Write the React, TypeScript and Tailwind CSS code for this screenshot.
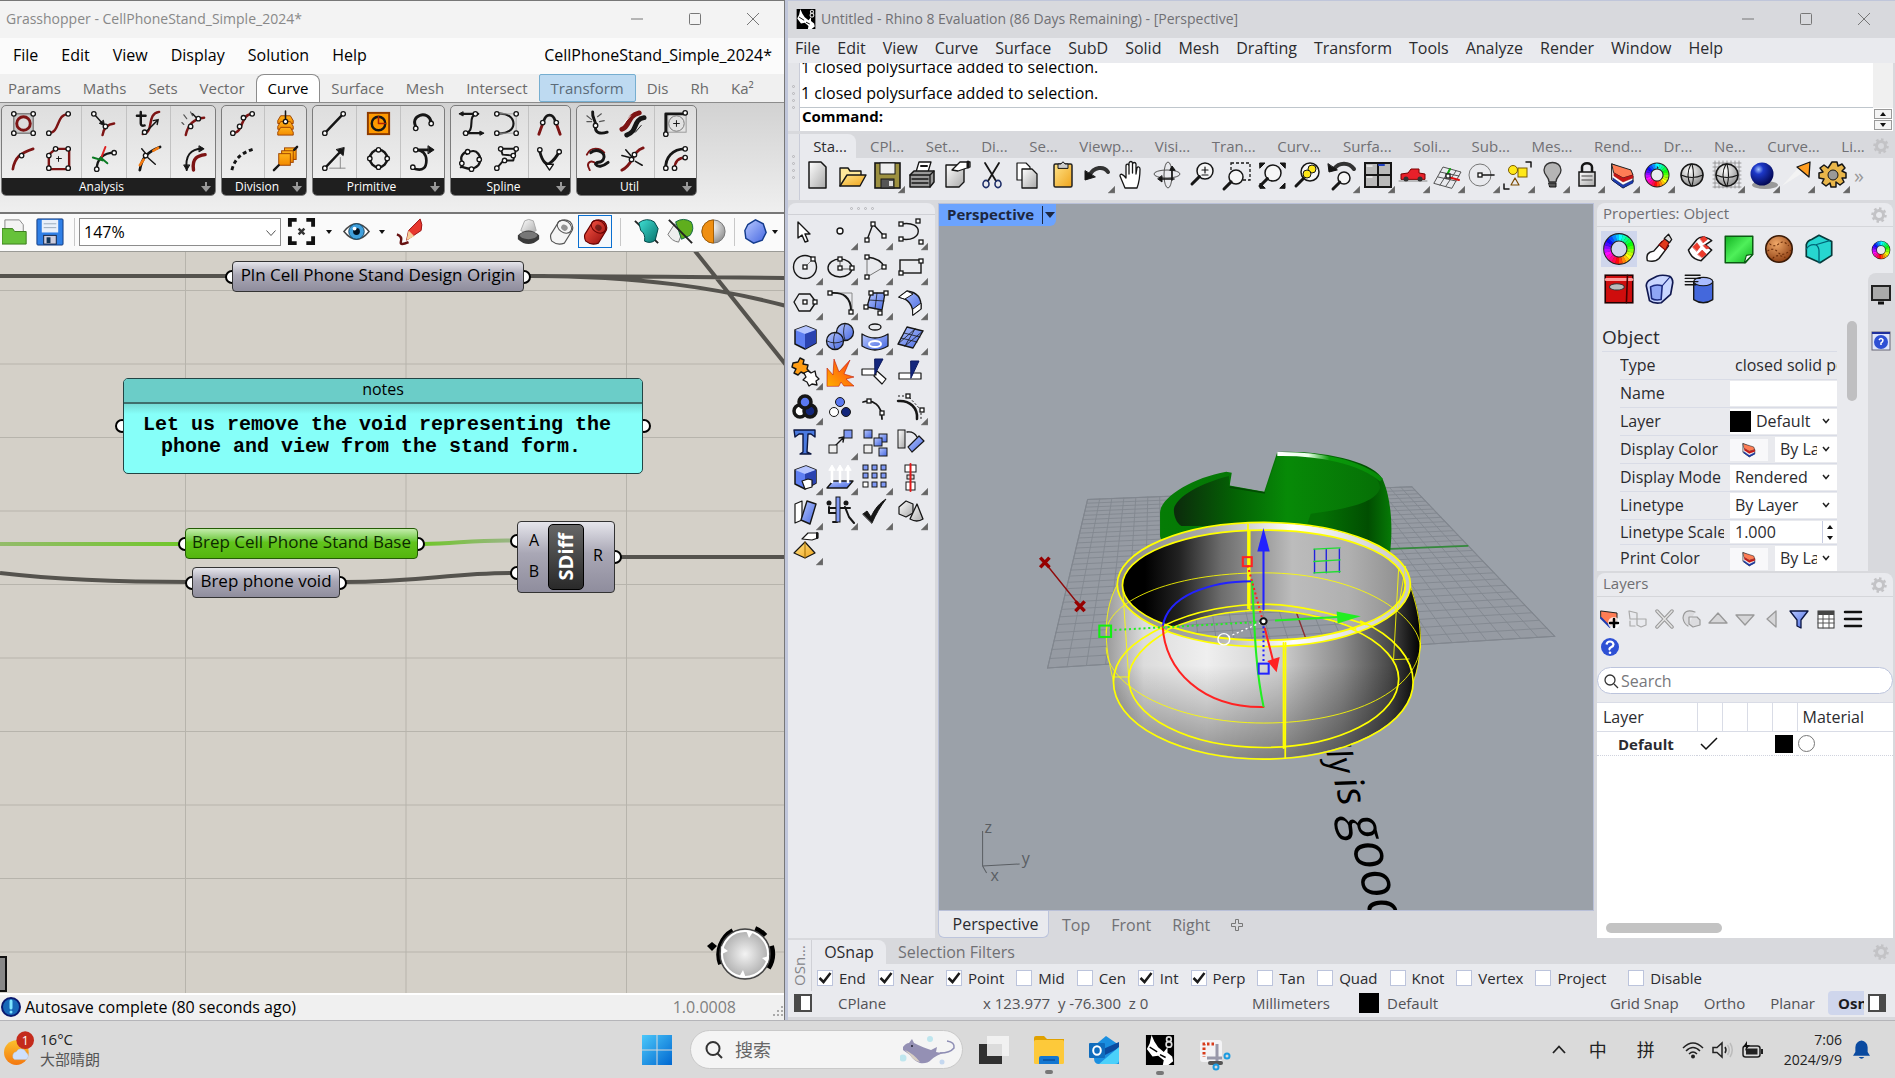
import React from "react";
import type { ReactNode } from "react";

/* ---------- drawing helpers ---------- */
const K = "#161616";
const M = "#7d1414";
const L = (d: string, c = K, w = 1.5, f = "none") => (
  <path d={d} stroke={c} strokeWidth={w} fill={f} strokeLinecap="round" strokeLinejoin="round" />
);
const Dots = ({ p }: { p: number[][] }) => (
  <>
    {p.map(([x, y], i) => (
      <circle key={i} cx={x} cy={y} r="2.3" fill="#fff" stroke={K} strokeWidth="1.4" />
    ))}
  </>
);
const Sqs = ({ p }: { p: number[][] }) => (
  <>
    {p.map(([x, y], i) => (
      <rect key={i} x={x - 2} y={y - 2} width="4" height="4" fill="#fff" stroke={K} strokeWidth="1.3" />
    ))}
  </>
);
const Wheel = ({ cx, cy, r, w }: { cx: number; cy: number; r: number; w: number }) => (
  <>
    <circle cx={cx} cy={cy} r={r} fill="none" stroke="#222" strokeWidth={w + 2} />
    {Array.from({ length: 24 }, (_, i) => (
      <circle
        key={i}
        cx={cx}
        cy={cy}
        r={r}
        fill="none"
        stroke={`hsl(${270 - i * 15} 100% 52%)`}
        strokeWidth={w}
        pathLength={24}
        strokeDasharray="1.05 22.95"
        strokeDashoffset={-i - 12}
      />
    ))}
  </>
);

const Defs = () => (
  <svg className="absolute size-0" aria-hidden="true">
    <defs>
      <linearGradient id="blue" x1="0" y1="0" x2="1" y2="1"><stop offset="0" stopColor="#b9c9ff" /><stop offset="1" stopColor="#4466e0" /></linearGradient>
      <linearGradient id="grey" x1="0" y1="0" x2="1" y2="1"><stop offset="0" stopColor="#fff" /><stop offset="1" stopColor="#a9a9a9" /></linearGradient>
      <linearGradient id="gold" x1="0" y1="0" x2="1" y2="1"><stop offset="0" stopColor="#ffe48a" /><stop offset="1" stopColor="#efa41c" /></linearGradient>
      <linearGradient id="orange" x1="0" y1="0" x2="0" y2="1"><stop offset="0" stopColor="#ffb21a" /><stop offset="1" stopColor="#f28a00" /></linearGradient>
      <linearGradient id="fire" x1="1" y1="0" x2="0" y2="1"><stop offset="0" stopColor="#ff3c14" /><stop offset="1" stopColor="#ffb000" /></linearGradient>
      <linearGradient id="grn" x1="0" y1="0" x2="1" y2="1"><stop offset="0" stopColor="#12b322" /><stop offset=".5" stopColor="#4ff05a" /><stop offset="1" stopColor="#10b020" /></linearGradient>
      <radialGradient id="navy" cx=".35" cy=".3" r=".7"><stop offset="0" stopColor="#9fc0ff" /><stop offset=".3" stopColor="#1d38c8" /><stop offset="1" stopColor="#040a58" /></radialGradient>
      <radialGradient id="ball" cx=".4" cy=".3" r=".75"><stop offset="0" stopColor="#fff" /><stop offset="1" stopColor="#8b8b8b" /></radialGradient>
      <radialGradient id="wood" cx=".4" cy=".3" r=".75"><stop offset="0" stopColor="#f0a868" /><stop offset="1" stopColor="#8a3b10" /></radialGradient>
      <radialGradient id="knob" cx=".5" cy=".5" r=".6"><stop offset="0" stopColor="#f3f3f3" /><stop offset="1" stopColor="#9d9d9d" /></radialGradient>
      <linearGradient id="redg" x1="0" y1="0" x2="1" y2="1"><stop offset="0" stopColor="#ff5b4a" /><stop offset="1" stopColor="#8f0808" /></linearGradient>
      <linearGradient id="teal" x1="0" y1="0" x2="1" y2="1"><stop offset="0" stopColor="#3fe0d4" /><stop offset="1" stopColor="#08726c" /></linearGradient>
      <linearGradient id="sun" x1="0" y1="0" x2="0" y2="1"><stop offset="0" stopColor="#fbc02d" /><stop offset="1" stopColor="#f4780f" /></linearGradient>
      <linearGradient id="win" x1="0" y1="0" x2="1" y2="1"><stop offset="0" stopColor="#4cc8fa" /><stop offset="1" stopColor="#0067d0" /></linearGradient>
    </defs>
  </svg>
);

/* ---------- Grasshopper ribbon icons (30 x 30) ---------- */
const gh: Record<string, ReactNode> = {
  frame: <><rect x="5" y="5" width="20" height="20" fill="#c9c9c9" stroke="#555" /><circle cx="15" cy="15" r="7" fill="#ddd" stroke={M} strokeWidth="3" /><Dots p={[[5, 5], [25, 5], [5, 25], [25, 25]]} /></>,
  scurve: <>{L("M5 25C17 24 12 6 25 5", M, 2.5)}<Dots p={[[5, 25], [25, 5]]} /></>,
  closest: <>{L("M5 5L14 15")}{L("M15 12l1 5-5-2z", K, 1, K)}{L("M14 27C15 20 18 16 26 15", M, 2.5)}<Dots p={[[5, 5], [17, 18]]} /></>,
  tcurve: <>{L("M7 3v12q0 3 4 2M3 7h9", K, 2.5)}{L("M9 26C22 24 12 5 26 3", M, 2.5)}{L("M11 25L25 11M25 11l-1 5M25 11l-5 1")}<Dots p={[[11, 24]]} /></>,
  curvature: <>{L("M7 27C9 17 15 10 26 9", M, 2.5)}{L("M5 16l-2-2M8 10L5 6M14 7l-2-4", "#555", 1.2)}{L("M14 5l5 5")}<Dots p={[[20, 10], [12, 18]]} /></>,
  evalc: <>{L("M4 26C6 14 12 9 25 5", M, 2.8)}<Dots p={[[13, 12]]} /></>,
  area: <>{L("M5 11L12 5H26V26H5Z", M, 2.5)}{L("M15 13v5M13 15h5", K, 1)}<Dots p={[[12, 5], [25, 5], [5, 12], [5, 25], [25, 25]]} /></>,
  perp: <>{L("M8 26C8 16 14 9 27 9", K, 2.4)}{L("M12 16L17 3", "#d22", 2)}{L("M14 17L4 14M12 14L19 20", "#0a7a22", 2)}<Dots p={[[8, 26], [26, 9]]} /></>,
  torsion: <>{L("M6 27C8 14 14 8 27 3", K, 2.8)}{L("M6 22L10 16M20 7l5-3", "#f47a10", 2.6)}{L("M8 5l5 6M13 13l9 8")}<Dots p={[[12, 12]]} /></>,
  horiz: <>{L("M15 27C13 14 20 12 27 11", M, 3.5)}{L("M8 27C6 12 12 5 24 5", K, 2)}{L("M21 2l5 3-5 3zM5 22l3 5 3-5z", K, 1, K)}</>,
  divide: <>{L("M5 25C17 24 12 6 25 5", M, 2.6)}<Dots p={[[5, 25], [12, 18], [16, 9], [25, 5]]} /></>,
  contour: <>{[7, 13, 19].map((y) => <path key={y} d={`M7 ${y + 5}l3-5h10l3 5v3H7z`} fill="url(#orange)" stroke="#a04400" />)}{L("M15 2v11", K, 1.6)}<Dots p={[[15, 13]]} /></>,
  dash: <><path d="M4 27C7 15 14 9 27 5" stroke={K} strokeWidth="3" fill="none" strokeDasharray="4 3" /></>,
  sheets: <>{[0, 3, 6].map((o) => <rect key={o} x={14 - o} y={4 + o} width="12" height="12" fill="url(#orange)" stroke="#a04400" />)}{L("M24 6L27 3M3 27l5-5", K, 2.5)}</>,
  line: <>{L("M5 25L24 5", K, 2.5)}<Dots p={[[5, 25], [24, 5]]} /></>,
  circ: <><rect x="4" y="4" width="22" height="22" fill="#ff9a00" stroke="#8c3a00" strokeWidth="2" /><circle cx="15" cy="15" r="7" fill="none" stroke={K} strokeWidth="2.5" />{L("M15 15h7M15 8v7", "#b32000", 1.6)}</>,
  arc: <>{L("M9 20C0 6 22 0 24 14", K, 3)}<Dots p={[[8, 20], [24, 15]]} /></>,
  vec: <>{L("M5 25L22 7", K, 2.5)}{L("M25 4l-1 8-7-6z", K, 1, K)}{L("M10 25h16M21 14v11", "#888", 1)}<Dots p={[[5, 25]]} /></>,
  ring: <><circle cx="15" cy="15" r="9" fill="none" stroke={K} strokeWidth="2.6" /><Dots p={[[15, 6], [15, 24], [6, 15], [24, 15]]} /></>,
  hook: <>{L("M5 25C16 29 19 24 19 17C19 11 15 6 9 6H20", K, 2.8)}{L("M21 2l6 4-6 4z", K, 1, K)}<Dots p={[[5, 24], [8, 6]]} /></>,
  bez: <>{L("M5 5H22C8 6 22 24 7 25H25", K, 2.2)}{L("M6 3l-4 2 4 2zM24 23l4 2-4 2z", K, 1, K)}<Dots p={[[19, 5], [9, 25]]} /></>,
  interp: <>{L("M5 5C28 2 28 28 5 25", K, 2.2)}{L("M5 5h20v20H5", "#aaa", 1)}<Dots p={[[5, 5], [25, 5], [5, 25], [25, 25]]} /></>,
  cat: <>{L("M9 13C11 4 19 4 21 13", K, 2.8)}{L("M4 26L8 15M26 26L22 15", M, 3)}<Dots p={[[8, 14], [22, 14]]} /></>,
  kink: <>{L("M10 10C20 2 28 14 22 22C14 30 6 22 4 24", K, 2.4)}{L("M6 20C2 14 6 8 12 8", K, 2.4)}<Dots p={[[11, 8], [23, 16], [5, 20], [15, 26]]} /></>,
  poly: <>{L("M5 25L12 17H22L25 5H9L11 11L22 12", K, 2)}<Dots p={[[5, 25], [13, 17], [22, 12], [25, 5], [9, 5]]} /></>,
  vee: <>{L("M5 8C8 20 13 22 15 20C18 18 22 14 25 8", K, 3)}{L("M11 21h8l-4 6z", K, 1.4, "#fff")}<Dots p={[[5, 6], [25, 8]]} /></>,
  tt: <>{L("M10 3C9 10 14 12 13 18C12 25 18 26 25 24", K, 3)}{L("M4 7l5 4M15 8l4-3M4 13l5 0M17 13l5-1", "#555", 1.2)}<Dots p={[[13, 17]]} /></>,
  flip: <>{L("M4 21C13 18 9 7 22 4", M, 5)}{L("M9 27C21 23 15 11 27 9", K, 5)}{L("M6 15l7-8", "#fff", 1)}{L("M18 24l6-7", K, 1)}</>,
  fillet: <><rect x="7" y="5" width="19" height="19" fill="none" stroke="#999" />{L("M5 25V5H26", K, 3)}<circle cx="16" cy="15" r="8" fill="none" stroke="#777" />{L("M13 15h6M16 12v6", K, 1)}<Dots p={[[25, 4], [5, 26]]} /></>,
  swirl: <>{L("M4 11C8 2 18 4 22 9", M, 2)}{L("M7 27C2 18 9 16 14 21", M, 2)}{L("M8 9C14 4 25 9 21 16C18 21 14 17 13 21C15 24 20 24 26 19", K, 3)}</>,
  rebuild: <>{L("M4 27C16 22 14 8 26 4", M, 3)}{L("M8 6l6 7M4 12l8 2M18 18l7 4", K, 1.6)}<Dots p={[[14, 16], [17, 11]]} /></>,
  offset: <>{L("M5 26C4 14 12 5 25 5", K, 3)}{L("M14 26C14 18 18 14 26 14", M, 2.5)}<Dots p={[[5, 25], [14, 25], [25, 5], [25, 14]]} /></>,
};
const groups: { name: string; width: string; cols: string[][][] }[] = [
  { name: "Analysis", width: "w-[215px]", cols: [[["frame", "evalc"], ["scurve", "area"]], [["closest", "perp"]], [["tcurve", "torsion"]], [["curvature", "horiz"]]] },
  { name: "Division", width: "w-[86px]", cols: [[["divide", "dash"]], [["contour", "sheets"]]] },
  { name: "Primitive", width: "w-[133px]", cols: [[["line", "vec"]], [["circ", "ring"]], [["arc", "hook"]]] },
  { name: "Spline", width: "w-[121px]", cols: [[["bez", "kink"], ["interp", "poly"]], [["cat", "vee"]]] },
  { name: "Util", width: "w-[121px]", cols: [[["tt", "swirl"], ["flip", "rebuild"]], [["fillet", "offset"]]] },
];

/* ---------- Rhino icons, 35 x 36, centred on 17,17 ---------- */
const mag = (x: number, y: number, r: number) => (
  <>
    <circle cx={x} cy={y} r={r} fill="#f6f6f6" stroke={K} strokeWidth="1.5" />
    {L(`M${x - r * 0.7} ${y + r * 0.7}L${x - r - 5} ${y + r + 5}`, K, 3)}
  </>
);
const stackIcon = (
  <>
    {L("M7 6L25 14L28 18V24L18 30L7 22Z", "#111", 1, "#fff")}
    {L("M7 6L26 12L28 17L18 20L9 15Z", "#222", 1, "#ff7d55")}
    {L("M9 15L18 20L28 17V20L18 24L9 18Z", "#a01010", 0.5, "#c81414")}
    {L("M8 20L18 27L28 22V25L18 30L8 23Z", "#0a1550", 0.5, "#1c3cb0")}
  </>
);
const sphere = (
  <>
    <circle cx="17" cy="17" r="11" fill="url(#ball)" stroke={K} strokeWidth="1.5" />
    {L("M6 17Q17 22 28 17M16 6Q10 17 16 28M17 6Q20 17 17 28", K, 1.1)}
  </>
);
const cube = (
  <>
    {L("M7 10L18 6L28 10V23L17 29L7 24Z", K, 1.5, "#5f7ff2")}
    {L("M7 10L18 6L28 10L17 14Z", "none", 0, "#b5c5ff")}
    {L("M17 14L28 10V23L17 29Z", "none", 0, "#2b43b0")}
  </>
);
const rh: Record<string, ReactNode> = {
  new: L("M9 4H21L26 9V30H9Z", K, 1.5, "url(#grey)"),
  open: <>{L("M5 28V10H13L15 13H26V17", K, 1.4, "#ffe89a")}{L("M5 28L12 17H31L25 28Z", K, 1.4, "url(#gold)")}</>,
  save: <><rect x="5" y="5" width="25" height="25" fill="#9c9040" stroke={K} strokeWidth="1.6" /><rect x="10" y="5" width="15" height="11" fill="#eee" stroke={K} /><rect x="11" y="21" width="13" height="9" fill="#555" stroke={K} /><rect x="19" y="23" width="4" height="5" fill="#ddd" /></>,
  print: <>{L("M11 14L14 4H26L23 14Z", K, 1.3, "#fff")}{L("M5 17L9 13H29V24L25 29H5Z", K, 1.5, "#999")}{L("M5 17H25V29M25 17l4-4M7 21h16M7 25h16", K, 1.3)}{L("M16 8h6", K, 2)}</>,
  props: <>{L("M6 7H24V24L19 29H6Z", K, 1.4, "url(#grey)")}{L("M12 12L20 4H30V9L24 11L18 13Z", K, 1.3, "#fff")}{L("M28 4v5", K, 3)}</>,
  cut: <>{L("M10 5L21 23M24 5L13 23", K, 1.8)}<ellipse cx="11" cy="26" rx="3" ry="3.6" fill="none" stroke="#20306a" strokeWidth="1.6" /><ellipse cx="23" cy="26" rx="3" ry="3.6" fill="none" stroke="#20306a" strokeWidth="1.6" /></>,
  copy: <>{L("M7 5H16L20 9V22H7Z", K, 1.2, "#fff")}{L("M12 11H22L27 16V30H12Z", K, 1.3, "url(#grey)")}</>,
  paste: <><rect x="9" y="6" width="18" height="23" rx="1.5" fill="url(#gold)" stroke="#222" strokeWidth="1.5" />{L("M13 10V6H16Q18 2 20 6H23V10Z", K, 1, "#ccc")}</>,
  undo: <>{L("M9 18C14 8 24 8 28 14", "#333", 4)}{L("M5 13L5 22L15 19Z", K, 1, K)}</>,
  pan: L("M10 30L5 18C5 15 8 16 11 20V8C11 5 14 6 14 8V16V5C15 3 17 3 17.5 5V15V6C18 4 20.5 4 21 6V16L22 10C23 8 25 9 25 11C25 18 25 22 22 30Z", K, 1.3, "#fff"),
  rotate: <><ellipse cx="17" cy="16" rx="13" ry="4" fill="none" stroke="#555" /><ellipse cx="18" cy="17" rx="4" ry="13" fill="none" stroke="#555" />{L("M12 21h12M22 11v11", K, 1.6)}{L("M12 18v6l-4-3zM20 12l2-4 3 4z", K, 1, K)}</>,
  zoompm: <>{mag(20, 13, 8)}{L("M17 12h6M20 9v6M17 17h6", K, 1.2)}</>,
  zoomwin: <><rect x="11" y="5" width="19" height="17" fill="none" stroke={K} strokeWidth="1.3" strokeDasharray="3 2" />{mag(16, 19, 7)}</>,
  zoomext: <>{mag(18, 15, 8)}{L("M5 5h5L5 10zM30 5h-5l5 5zM30 30v-5l-5 5zM5 30v-5l5 5z", K, 1, K)}</>,
  zoomsel: <>{mag(20, 14, 9)}<circle cx="22" cy="11" r="4" fill="#ffe818" stroke={K} /><circle cx="17" cy="16" r="4" fill="#ffe818" stroke={K} /></>,
  undoview: <>{mag(19, 20, 6)}{L("M9 11C14 4 24 4 29 11", "#333", 4)}{L("M3 6L4 14L12 12Z", K, 1, K)}</>,
  four: <><rect x="5" y="5" width="26" height="24" fill="#b9b9b9" stroke={K} strokeWidth="2" />{L("M18 5V29M5 17H31", K, 2)}{L("M7 8h5M7 19h5", "#eee")}{L("M19 7h5", "#2040c0", 2)}</>,
  car: <>{L("M4 23H32", "#888", 1)}{L("M6 21V16L13 15L16 11H24V15L30 16V21Z", "#7a0000", 1, "#e8202a")}<circle cx="11" cy="21" r="2.5" fill="#333" /><circle cx="25" cy="21" r="2.5" fill="#333" /></>,
  cplane: <>{L("M4 25L13 9L31 14L22 30ZM8 19L26 23M10 14L29 18M10 27L20 11M16 28L26 13", "#444", 0.9)}{L("M17 17L20 11", "#1a1", 2)}{L("M18 19L29 22", "#d11", 2)}<Sqs p={[[18, 18]]} /></>,
  circdraw: <><circle cx="15" cy="17" r="11" fill="none" stroke="#777" />{L("M15 17H29", K, 1.6)}<Sqs p={[[15, 17]]} /></>,
  shapes: <><circle cx="13" cy="12" r="4.5" fill="#ffe818" stroke="#7a5a00" /><rect x="18" y="10" width="9" height="9" fill="#ffe818" stroke="#7a5a00" />{L("M15 20L19 27H11Z", "#7a4a00", 1.2)}{L("M26 4h5v5M4 26v5h5", K, 1.5)}</>,
  bulb: <>{L("M14 24C14 18 9 18 9 12C9 2 26 2 26 12C26 18 21 18 21 24Z", "#333", 1.3, "#b5b5b5")}{L("M14 25h7v4h-6z", K, 1, "#555")}</>,
  lock: <>{L("M12 15V9C12 4 22 4 22 9V15", K, 2.5)}<rect x="9" y="14" width="16" height="14" fill="url(#grey)" stroke={K} strokeWidth="1.5" />{L("M12 18h10M12 22h10", "#777")}</>,
  layer: stackIcon,
  wheel: <Wheel cx={17} cy={17} r={9} w={5} />,
  bigwheel: <Wheel cx={17} cy={17} r={11} w={6} />,
  sphere,
  spheregrid: <>{L("M5 3V30M9 3V30M13 3V30M17 3V30M21 3V30M25 3V30M29 3V30M3 5H31M3 9H31M3 13H31M3 17H31M3 21H31M3 25H31M3 29H31", "#888", 0.8)}{sphere}</>,
  bluesphere: <><ellipse cx="20" cy="27" rx="13" ry="4" fill="#999" /><circle cx="17" cy="16" r="11.5" fill="url(#navy)" /></>,
  light: <>{L("M2 28L24 14L20 8Z", "none", 0, "#f3f3f3")}{L("M17 9L30 4L29 19Z", K, 1.3, "#ff9d20")}</>,
  gear: <>{L("M17 4h5l1 4 4-2 3 4-3 3 4 2v5l-4 0 2 4-4 3-4-3v5h-5l-1-4-4 3-4-3 2-4-5-1v-5l4-1-3-4 4-3 4 3z", K, 1.5, "#e9b64a")}<circle cx="18" cy="17" r="5" fill="#999" stroke={K} /></>,
  arrow: L("M10 7V23L14 20L17 27L20 26L17 19H22Z", K, 1.4, "#fff"),
  point: <circle cx="17" cy="16" r="3" fill="#fff" stroke={K} strokeWidth="1.4" />,
  polyl: <>{L("M9 25L15 9L26 21", K, 1.4)}<Sqs p={[[9, 25], [15, 9], [26, 21]]} /></>,
  ccurve: <>{L("M8 9C32 5 30 28 8 24", K, 1.4)}<Sqs p={[[8, 9], [25, 6], [8, 24], [28, 27]]} /></>,
  circle: <><circle cx="17" cy="17" r="11.5" fill="none" stroke={K} strokeWidth="1.4" />{L("M17 17L25 9", "#888", 1)}<Sqs p={[[17, 17], [25, 9]]} /></>,
  ell: <><ellipse cx="17" cy="18" rx="12" ry="9" fill="none" stroke={K} strokeWidth="1.4" />{L("M17 10V19H29", "#555", 1)}<Sqs p={[[17, 9], [17, 18], [29, 18]]} /></>,
  arc3: <>{L("M9 7C18 8 24 11 26 17", K, 1.4)}{L("M9 7V27L26 17", "#777", 1)}<Sqs p={[[9, 7], [9, 27], [26, 17]]} /></>,
  rect: <><rect x="7" y="10" width="21" height="13" fill="none" stroke={K} strokeWidth="1.4" /><Sqs p={[[8, 23], [28, 11]]} /></>,
  hex: <>{L("M11 9H22L28 17L22 26H11L6 17Z", K, 1.4)}<Sqs p={[[17, 17], [27, 17]]} /></>,
  fil: <>{L("M8 8H29V26", "#888", 1)}{L("M8 8C20 7 28 12 28 26", K, 2)}<Sqs p={[[7, 8], [28, 27]]} /></>,
  patch: <>{L("M13 8H27L24 25L9 22Z", K, 1.3, "url(#blue)")}{L("M19 8L17 24M11 15L26 16", K, 0.8)}<Sqs p={[[13, 8], [28, 8], [8, 22], [22, 28]]} /></>,
  sweep: <>{L("M6 12L14 6C24 7 29 13 28 24L20 30C20 20 16 14 6 12Z", K, 1.3, "url(#blue)")}{L("M6 12L14 6L20 9L12 14ZM20 24L28 18V24L20 30Z", K, 1, "#fff")}</>,
  box: cube,
  spheres: <><circle cx="22" cy="12" r="8.5" fill="url(#blue)" stroke={K} strokeWidth="1.3" /><circle cx="12" cy="21" r="8.5" fill="url(#blue)" stroke={K} strokeWidth="1.3" />{L("M4 21Q12 25 20 21M22 4Q19 12 22 20M12 13Q9 21 12 29", K, 0.8)}</>,
  bool: <><ellipse cx="17" cy="7" rx="6" ry="3" fill="none" stroke={K} strokeWidth="1.3" />{L("M4 14Q17 22 30 14V26Q17 34 4 26Z", K, 1.3, "url(#blue)")}<ellipse cx="17" cy="24" rx="6" ry="3" fill="none" stroke="#fff" strokeWidth="2" /></>,
  mesh: <>{L("M5 24L14 7L30 11L20 28Z", K, 1.3, "url(#blue)")}{L("M8 18L24 22M11 13L27 17M12 26L22 9M5 24L22 9M12 26L30 11", K, 0.8)}</>,
  puzzle: <>{L("M5 8L10 7L12 3L16 5L15 9L20 10L19 14L22 17L17 19L13 17L10 20L6 18L8 14L4 12Z", K, 1.4, "#ff9d14")}{L("M16 18L20 16L23 18L27 16L28 21L31 24L28 26L29 30L24 29L21 31L19 27L15 25L18 22Z", K, 1.3, "#fff")}</>,
  explode: L("M4 31V13L10 20L11 4L16 17L27 5L21 19L31 22L23 24L31 31H21L18 27L16 31Z", "#c01a08", 0.6, "url(#fire)"),
  trim: <>{L("M4 14H18V20H4ZM19 16L28 24L24 29L16 21Z", K, 1.2, "#fff")}{L("M17 4H25L17 19Z", "#0c1a60", 1, "#13267c")}</>,
  split: <>{L("M6 18H28V24H6Z", K, 1.2, "#fff")}{L("M18 6H26L18 23Z", "#0c1a60", 1, "#13267c")}</>,
  group: <><circle cx="12" cy="21" r="6" fill="#fff" stroke={K} strokeWidth="3.5" /><circle cx="22" cy="21" r="6" fill="#13267c" stroke={K} strokeWidth="3.5" /><circle cx="17" cy="12" r="6" fill="#5a78f0" stroke={K} strokeWidth="3.5" /></>,
  ungroup: <><circle cx="17" cy="12" r="4.5" fill="#5a78f0" stroke={K} /><circle cx="11" cy="22" r="4.5" fill="#fff" stroke={K} /><circle cx="23" cy="22" r="4.5" fill="#13267c" stroke={K} /></>,
  ptedit: <>{L("M5 12C15 9 24 15 24 29", K, 1.8)}<Sqs p={[[11, 11], [24, 23]]} /></>,
  cvedit: <>{L("M5 11C17 10 25 18 24 29", K, 2.5)}<path d="M5 6H15L28 20V30" fill="none" stroke={K} strokeDasharray="2 2" /><Sqs p={[[15, 6], [29, 20]]} /></>,
  text: <>{L("M6 5H27V12L23 9H20L19 27L23 29H12L15 27V9H11L7 12Z", "#0c1740", 1.4, "#4a7ae0")}</>,
  move: <>{L("M12 21L21 12M21 12l-1 5M21 12l-5 1", K, 1.4)}<rect x="6" y="20" width="8" height="8" fill="#eee" stroke={K} /><rect x="21" y="5" width="8" height="8" fill="#7f99f5" stroke={K} /></>,
  copyo: <>{[[6, 5], [21, 9], [21, 23], [16, 13]].map(([x, y], i) => <rect key={i} x={x} y={y} width="8" height="8" fill="url(#blue)" stroke={K} />)}<rect x="6" y="20" width="8" height="8" fill="#eee" stroke={K} /></>,
  rot: <><rect x="5" y="5" width="7" height="18" fill="url(#grey)" stroke={K} />{L("M14 7Q21 6 24 12", K, 1.3)}{L("M15 22L26 11L31 16L19 27Z", K, 1.2, "url(#blue)")}</>,
  boxw: <>{cube}{L("M14 21L20 19L24 20V27L17 29Z", K, 1.2, "#fff")}</>,
  extr: <>{L("M4 28L10 21H30L24 28Z", K, 1.4, "url(#blue)")}{L("M9 22V8M17 22V8M25 22V8", "#fff", 2.5)}{L("M6 10l3-5 3 5zM14 10l3-5 3 5zM22 10l3-5 3 5z", "#fff", 1, "#fff")}</>,
  array: <>{[5, 14, 23].map((x) => [5, 13, 22].map((y) => <rect key={`${x}${y}`} x={x} y={y} width="5" height="5" fill={x === 5 && y === 22 ? "#fff" : "#7f99f5"} stroke={K} />))}</>,
  dim: <><rect x="12" y="5" width="11" height="7" fill="#fff" stroke={K} /><rect x="14" y="15" width="7" height="4" fill="#ddd" stroke={K} /><rect x="13" y="22" width="9" height="8" fill="#fff" stroke={K} />{L("M17.5 4V31", "#e01818", 2)}</>,
  books: <>{L("M7 9L14 6V25L7 28Z", K, 1.2, "#fff")}{L("M19 6L28 9L22 29L13 25Z", K, 1.4, "url(#blue)")}</>,
  flow: <><circle cx="6" cy="8" r="2.5" fill={K} /><circle cx="23" cy="8" r="2.5" fill={K} />{L("M6 12V18H14V27M6 13H27M22 12L26 22L31 28M10 27h4", K, 2)}<rect x="13" y="2" width="4" height="25" fill="#7f99f5" stroke={K} /></>,
  check: L("M5 19L9 16L13 22C17 13 22 8 28 4C22 12 18 19 14 28Z", K, 1, K),
  solids: <>{L("M6 12L13 6L20 9V18L13 22L6 19Z", K, 1.2, "url(#grey)")}{L("M24 9L30 24Q24 28 17 24Z", K, 1.3, "url(#grey)")}</>,
  pyramid: <>{L("M17 12L27 23L17 28L6 23Z", K, 1.2, "url(#gold)")}{L("M17 12V28", "#a06a00", 1)}{L("M14 9L20 3H30V8L24 10Z", K, 1.2, "#fff")}{L("M29 3v5", K, 2)}</>,
  paint: <>{L("M6 28Q4 20 12 19L20 10L26 14L17 26Q13 30 6 28Z", K, 1.4, "#fff")}{L("M17 13L23 18L27 10L23 7Z", "#800", 1, "#e03a1c")}{L("M22 7L26 3L29 8L27 11Z", K, 1.2, "#ddd")}</>,
  texture: <>{L("M7 18L15 8Q20 3 29 9L23 13L29 18L19 28Q10 27 7 18Z", K, 1.4, "#fff")}{L("M11 15l4-4 3 4-3 4zM18 7l4-2 3 3-4 3zM16 22l4-4 4 4-4 3zM21 14l3 3 3-1-4-3z", "#c22", 0.5, "#ee3b2a")}</>,
  decal: <>{L("M4 5H30V22L23 30H4Z", "#0a5a12", 1.4, "url(#grn)")}{L("M22 30L24 23L30 22Z", "#0a5a12", 1, "#fff")}</>,
  wood: <><circle cx="17" cy="17" r="12.5" fill="url(#wood)" stroke="#3a1a06" strokeWidth="1.5" /><path d="M8 12q5 4 9 0t9 2M6 19q6-4 10 1t12-2M11 26q4-5 12-1" fill="none" stroke="#6a2b08" strokeDasharray="2 2" /></>,
  edge: <>{L("M5 13Q6 9 10 8L17 4L29 10V23L18 30L5 24Z", "#063a3a", 1.6, "#27d6d0")}{L("M5 17Q8 12 14 13Q17 15 17 19V30M14 13L27 9", "#067", 1.2)}</>,
  cabinet: <><rect x="4" y="4" width="26" height="26" fill="#cf0d0d" stroke="#200" strokeWidth="1.5" />{L("M5 8H29", "#ff9a9a", 3)}<ellipse cx="15" cy="15" rx="7" ry="3" fill="#bbb" stroke="#333" />{L("M25 4L24 30", "#400", 1.5)}</>,
  shell: <>{L("M5 14Q5 10 9 8L15 5Q20 3 27 5Q30 7 30 11L28 22L19 30Q12 31 8 28Z", "#101850", 1.6, "#c9d6ff")}{L("M9 15Q14 12 20 14L19 27Q13 28 10 26Z", "#1c2a80", 1.5, "#8fa6f6")}{L("M20 14L27 6", "#1c2a80", 1)}</>,
  cyl: <>{L("M12 10V27Q21 33 30 27V10", K, 1.3, "#4468dc")}<ellipse cx="21" cy="10" rx="9" ry="4" fill="#a9bcff" stroke={K} />{L("M4 4H18M4 7H18M4 10H16M4 13H14", K, 1.3)}</>,
};
const toolbar = ["new", "open", "save*", "print", "props", "cut", "copy", "paste", "undo*", "pan", "rotate", "zoompm", "zoomwin", "zoomext", "zoomsel", "undoview*", "four*", "car*", "cplane*", "circdraw*", "shapes*", "bulb*", "lock*", "layer*", "wheel*", "sphere", "spheregrid*", "bluesphere*", "light*", "gear*"];
const toolbox = ["arrow", "point*", "polyl*", "ccurve*", "circle*", "ell*", "arc3*", "rect*", "hex*", "fil*", "patch*", "sweep*", "box*", "spheres*", "bool*", "mesh*", "puzzle*", "explode", "trim", "split", "group*", "ungroup", "ptedit", "cvedit*", "text", "move*", "copyo", "rot", "boxw*", "extr*", "array*", "dim*", "books*", "flow*", "check*", "solids*", "pyramid*"];

const Tool = ({ id }: { id: string }) => {
  const name = id.replace("*", "");
  return (
    <button type="button" aria-label={name} className="h-9 w-[35px] shrink-0">
      <svg viewBox="0 0 35 36" className="h-9 w-[35px]">
        {rh[name]}
        {id.endsWith("*") && <path d="M35 28V35H28Z" fill="#666" stroke="#888" strokeWidth=".5" />}
      </svg>
    </button>
  );
};
const Gear = () => (
  <svg viewBox="0 0 16 16" className="size-4 shrink-0">
    <circle cx="8" cy="8" r="4.5" fill="none" stroke="#c3c3c6" strokeWidth="3" />
    <circle cx="8" cy="8" r="6.5" fill="none" stroke="#c3c3c6" strokeWidth="2.5" pathLength={16} strokeDasharray="1 1" />
  </svg>
);
const Caret = () => (
  <svg viewBox="0 0 6 4" className="h-1 w-1.5 shrink-0"><path d="M0 0H6L3 4Z" fill="#111" /></svg>
);
const WinButtons = ({ className = "" }: { className?: string }) => (
  <div className={`ml-auto flex items-center text-[#777] ${className}`}>
    <button type="button" aria-label="Minimize"><svg viewBox="0 0 14 14" className="size-3.5"><path d="M1 7H13" stroke="currentColor" /></svg></button>
    <button type="button" aria-label="Maximize"><svg viewBox="0 0 14 14" className="size-3.5"><rect x="1.5" y="1.5" width="11" height="11" rx="1" fill="none" stroke="currentColor" /></svg></button>
    <button type="button" aria-label="Close"><svg viewBox="0 0 14 14" className="size-3.5"><path d="M1 1L13 13M13 1L1 13" stroke="currentColor" /></svg></button>
  </div>
);

/* ---------- Grasshopper ---------- */
const ghTabs = ["Params", "Maths", "Sets", "Vector", "Curve", "Surface", "Mesh", "Intersect", "Transform", "Dis", "Rh", "Ka²"];

const Pipe = ({ fill, line = K }: { fill: string; line?: string }) => (
  <>
    <path d="M4 18L12 5Q18 1 24 5Q28 9 26 14L18 27Q11 30 5 25Q3 21 4 18Z" fill={fill} stroke={line} strokeWidth="1.2" />
    <ellipse cx="18" cy="10" rx="8" ry="6" fill="none" stroke={line} transform="rotate(35 18 10)" />
    <ellipse cx="18" cy="11" rx="3.5" ry="3" fill="#000" fillOpacity=".4" transform="rotate(35 18 11)" />
  </>
);
const GhTool = ({ label, children, active = false }: { label: string; children: ReactNode; active?: boolean }) => (
  <button type="button" aria-label={label} className={active ? "grid h-[33px] w-[34px] place-items-center border border-[#0a6fd0] bg-[#f4f8fc]" : "grid h-[33px] w-[33px] place-items-center"}>
    <svg viewBox="0 0 30 30" className="size-[29px]">{children}</svg>
  </button>
);

const Port = ({ side }: { side: "l" | "r" }) => (
  <span className={side === "l" ? "absolute top-1/2 -left-[8px] -z-10 size-[14px] -translate-y-1/2 rounded-full border-2 border-black bg-white" : "absolute top-1/2 -right-[8px] -z-10 size-[14px] -translate-y-1/2 rounded-full border-2 border-black bg-white"} />
);
const nodeGrey = "bg-linear-to-b from-[#e6e6ec] from-0% via-[#a9a7b5] via-45% to-[#8f8d9d]";

const Canvas = () => (
  <div className="relative isolate flex-1 overflow-hidden border-t border-[#9a9a96] bg-[#d4d0c8]">
    <svg className="absolute inset-0 -z-20 size-full">
      <defs>
        <pattern id="cgrid" width="220.5" height="73.5" x="185" y="38" patternUnits="userSpaceOnUse"><path d="M.5 0V74M0 .5H221" stroke="#b7b4ac" fill="none" /></pattern>
        <linearGradient id="wg" x1="0" x2="1"><stop offset="0" stopColor="#93bb6a" /><stop offset="1" stopColor="#70c62a" /></linearGradient>
        <linearGradient id="wg2" x1="0" x2="1"><stop offset="0" stopColor="#70c62a" /><stop offset="1" stopColor="#9ab586" /></linearGradient>
      </defs>
      <rect width="100%" height="100%" fill="url(#cgrid)" />
      <g fill="none" stroke="#55534e" strokeWidth="4">
        <path d="M0 24H230M529 24C620 24 700 25 790 26M529 24C640 24 720 36 790 55M695 -1L790 118M0 321C60 328 130 330 190 330M345 330C420 330 450 321 512 321M620 305H790" />
      </g>
      <rect x="0" y="290" width="182" height="4" fill="url(#wg)" />
      <path d="M423 292C455 292 470 288 512 288.5" fill="none" stroke="url(#wg2)" strokeWidth="4" />
      <g transform="translate(745 702)">
        <path d="M-24 10A27 27 0 0 1 -12 -23M10 -25A27 27 0 0 1 20 -18M26 -8A27 27 0 0 1 23 14" fill="none" stroke="#000" strokeWidth="6" />
        <path d="M-38 -8l5-4 5 4-5 5z" fill="#000" />
        <circle r="25" fill="url(#knob)" stroke="#444" strokeWidth="1.5" />
        <circle r="23" fill="none" stroke="#fff" strokeWidth="2" />
        <path d="M1 -24l7 2-4 6zM24 2l-1 7-6-5zM-6 23l7 1-3-8zM-24 -8l7 5-6 3z" fill="#fff" />
      </g>
      <path d="M0 705H6V739H0" fill="#888" stroke="#111" strokeWidth="2" />
    </svg>

    <div className={`absolute top-[9px] left-[232px] flex h-[31px] w-[292px] items-center justify-center rounded-[4px] border border-[#333] pb-1 text-[17px] whitespace-nowrap text-black ${nodeGrey}`}>
      <Port side="l" />Pln Cell Phone Stand Design Origin<Port side="r" />
    </div>

    <div className="absolute top-[126px] left-[123px] flex h-24 w-[520px] flex-col">
      <Port side="l" />
      <Port side="r" />
      <div className="flex flex-1 flex-col overflow-hidden rounded-[5px] border border-[#244] bg-[#86fff9]">
        <h3 className="h-[25px] border-b-2 border-[#3f6f6c] bg-[#6bcdc8] text-center text-base leading-5 text-black">notes</h3>
        <div className="h-2.5 bg-linear-to-b from-[#76dcd6] to-[#86fff9]" />
        <p className="text-center font-['Liberation_Mono',monospace] text-xl leading-[22px] font-bold text-black">
          Let us remove the void representing the&nbsp;<br />phone and view from the stand form.&nbsp;&nbsp;
        </p>
      </div>
    </div>

    <div className="absolute top-[276px] left-[185px] flex h-[31px] w-[233px] items-center justify-center rounded-[4px] border border-[#245c05] bg-linear-to-b from-[#c3ecaa] from-0% via-[#62c51c] via-45% to-[#54b50e] pb-1 text-[17px] whitespace-nowrap text-[#0c2a00]">
      <Port side="l" />Brep Cell Phone Stand Base<Port side="r" />
    </div>
    <div className={`absolute top-[315px] left-[192px] flex h-[31px] w-[148px] items-center justify-center rounded-[4px] border border-[#333] pb-1 text-[17px] whitespace-nowrap text-black ${nodeGrey}`}>
      <Port side="l" />Brep phone void<Port side="r" />
    </div>
    <div className={`absolute top-[269px] left-[517px] flex h-[72px] w-[98px] rounded-[4px] border border-[#333] p-0.5 text-base text-black ${nodeGrey}`}>
      <div className="flex w-7 flex-col items-center justify-around pb-1"><span>A</span><span>B</span></div>
      <div className="grid w-9 place-items-center rounded-[5px] border border-black bg-linear-to-b from-[#666] to-[#2a2a2a]">
        <span className="rotate-180 text-xl leading-none font-bold text-white [writing-mode:vertical-rl]">SDiff</span>
      </div>
      <div className="flex flex-1 items-center justify-center pb-1">R</div>
      <span className="absolute top-3 -left-[8px] -z-10 size-[14px] rounded-full border-2 border-black bg-white" />
      <span className="absolute bottom-3 -left-[8px] -z-10 size-[14px] rounded-full border-2 border-black bg-white" />
      <Port side="r" />
    </div>
  </div>
);

const Grasshopper = () => (
  <section className="flex min-w-0 flex-col overflow-hidden border-t border-r border-[#777] bg-[#f0f0f0]">
    <header className="flex h-[37px] shrink-0 items-center bg-[#f3f3f3] pb-0.5 pl-1.5 text-sm text-[#888]">
      <h1>Grasshopper - CellPhoneStand_Simple_2024*</h1>
      <WinButtons className="gap-11 pr-6" />
    </header>
    <nav className="flex h-9 shrink-0 items-center gap-[23px] bg-[#fbfbfb] pr-3 pb-0.5 pl-[13px] text-base text-black">
      {["File", "Edit", "View", "Display", "Solution", "Help"].map((t) => <button type="button" key={t}>{t}</button>)}
      <span className="ml-auto">CellPhoneStand_Simple_2024*</span>
    </nav>
    <div className="flex h-[29px] shrink-0 items-end overflow-hidden border-b border-[#8c8c8c] text-[#6b6b6b]" role="tablist">
      {ghTabs.map((t) => (
        <button type="button" role="tab" key={t} className={t === "Curve" ? "h-[28px] rounded-t-lg border border-b-0 border-[#8c8c8c] bg-white px-[11px] pb-0.5 text-black" : t === "Transform" ? "h-7 rounded-[2px] border border-[#76aed0] bg-[#bedaf1] px-[11px] text-[#5b6b78]" : "h-7 px-[11px] first:pl-2"}>{t}</button>
      ))}
    </div>
    <div className="flex h-[109px] shrink-0 items-start gap-[5px] bg-linear-to-b from-[#d2d2d2] to-[#efefef] pt-[2px] pl-px">
      {groups.map((g) => (
        <div key={g.name} className={`flex h-[91px] flex-col overflow-hidden rounded-[5px] border border-[#7c7c7c] bg-linear-to-b from-[#dedede] to-[#f2f2f2] ${g.width}`}>
          <div className="flex flex-1 divide-x divide-[#c2c2c2]">
            {g.cols.map((sub, i) => (
              <div key={i} className="flex flex-auto justify-center">
                {sub.map((c) => (
                  <div key={c[0]} className="flex flex-col">
                    {c.map((n) => (
                      <button type="button" key={n} aria-label={n} className="grid h-[35px] w-[35px] place-items-center">
                        <svg viewBox="0 0 30 30" className="size-[29px]">{gh[n]}</svg>
                      </button>
                    ))}
                  </div>
                ))}
              </div>
            ))}
          </div>
          <div className="flex h-[17px] shrink-0 items-center bg-[#1f1f1f] pr-1 text-xs leading-[17px] text-white">
            <span className="flex-1 text-center">{g.name}</span>
            <svg viewBox="0 0 10 10" className="size-2.5"><path d="M5 0V7" stroke="#999" strokeWidth="2" /><path d="M0 4H10L5 10Z" fill="#999" /></svg>
          </div>
        </div>
      ))}
    </div>
    <div className="flex h-[39px] shrink-0 items-center overflow-hidden border-t-2 border-[#777] bg-[#fafafa] pb-0.5">
      <GhTool label="Open"><path d="M3 3H18L22 8V18H3Z" fill="#f3f3f3" stroke="#888" /><path d="M0 12H11L13 15H25V28H0Z" fill="#66c23a" stroke="#3a7d1c" /></GhTool>
      <GhTool label="Save"><rect x="2" y="2" width="27" height="27" rx="1" fill="#2f7fe6" stroke="#123a80" /><rect x="7" y="3" width="17" height="13" fill="#e9f0fa" /><path d="M9 7H22M9 11H22" stroke="#9ab" /><rect x="9" y="19" width="13" height="9" fill="#ccd" stroke="#124" /><rect x="12" y="21" width="4" height="6" fill="#135" /></GhTool>
      <span className="mr-1 ml-2 h-7 w-px bg-[#c8c8c8]" />
      <div className="relative h-7 w-[202px] border border-[#8c8c8c] bg-white">
        <select aria-label="Zoom" className="size-full appearance-none bg-transparent pl-1 text-base leading-5 text-black"><option>147%</option></select>
        <svg viewBox="0 0 10 6" className="pointer-events-none absolute top-[11px] right-1 h-1.5 w-2.5"><path d="M.5 .5L5 5.5L9.5 .5" fill="none" stroke="#555" /></svg>
      </div>
      <span className="ml-1"><GhTool label="Zoom extents"><path d="M3 10V3H10M20 3H27V10M27 20V27H20M10 27H3V20" stroke="#111" strokeWidth="4" fill="none" /><path d="M12 12l6 6M18 12l-6 6" stroke="#333" strokeWidth="2.5" /></GhTool></span>
      <span className="ml-2"><Caret /></span>
      <span className="ml-2"><GhTool label="Preview"><path d="M2 15Q15 -1 28 15Q15 31 2 15Z" fill="#fff" stroke="#444" strokeWidth="1.5" /><circle cx="15" cy="15" r="8" fill="#3f9fdc" stroke="#146" /><circle cx="15" cy="15" r="3.5" fill="#012" /><circle cx="13" cy="12" r="2" fill="#fff" /></GhTool></span>
      <span className="ml-1.5"><Caret /></span>
      <span className="ml-2"><GhTool label="Sketch"><path d="M2 18Q8 20 6 26Q5 30 14 26" stroke="#611" strokeWidth="2.5" fill="none" /><path d="M12 24L14 14L26 2Q29 8 27 14Z" fill="#e8382e" stroke="#911" /><path d="M12 24L14 14L20 20Z" fill="#f6cf9a" /></GhTool></span>
      <div className="ml-auto flex items-center">
        <GhTool label="No preview"><path d="M7 14L11 4Q15 1 20 4L23 14L15 18Z" fill="url(#grey)" stroke="#aaa" /><path d="M4 19Q15 9 26 19V23Q15 33 4 23Z" fill="#3a3a3a" /><ellipse cx="15" cy="19" rx="9" ry="4" fill="#777" /></GhTool>
        <GhTool label="Wireframe preview"><Pipe fill="#f5f5f5" line="#555" /></GhTool>
        <GhTool label="Shaded preview" active><Pipe fill="url(#redg)" line="#600" /></GhTool>
        <span className="ml-2 mr-2.5 h-7 w-px bg-[#c8c8c8]" />
        <GhTool label="Document preview"><path d="M2 4L26 27" stroke="#222" strokeWidth="2" /><path d="M6 6Q14 0 22 5L26 12L23 24Q18 28 12 25Q13 17 8 14Z" fill="url(#teal)" stroke="#044" /></GhTool>
        <GhTool label="Selected preview"><path d="M2 18L9 7L18 13L13 26Q6 25 2 18Z" fill="#eee" stroke="#777" /><path d="M10 5Q18 0 26 5Q30 12 25 19L16 23Z" fill="#5fae1d" stroke="#164" /><path d="M3 3L27 27" stroke="#222" strokeWidth="2" /></GhTool>
        <GhTool label="Mesh quality"><circle cx="15" cy="15" r="12" fill="url(#ball)" stroke="#777" /><path d="M15 3A12 12 0 0 0 15 27Z" fill="#ef8f12" stroke="#a55c00" /></GhTool>
        <span className="mx-1 h-7 w-px bg-[#c8c8c8]" />
        <GhTool label="Preview settings"><path d="M7 8L15 3L23 7L26 16L22 24L13 27L5 22L4 14Z" fill="url(#blue)" stroke="#123a8c" strokeWidth="1.5" /></GhTool>
        <span className="mr-1.5"><Caret /></span>
      </div>
    </div>
    <Canvas />
    <footer className="flex h-[27px] shrink-0 items-center border-t-2 border-white bg-[#f0f0f0] pb-0.5 text-base text-black">
      <svg viewBox="0 0 20 20" className="mr-1 ml-px size-5"><circle cx="10" cy="10" r="9" fill="#1768b8" stroke="#0a1a70" strokeWidth="2" /><path d="M10 4V11" stroke="#7fe6ff" strokeWidth="3" strokeLinecap="round" /><circle cx="10" cy="15" r="1.5" fill="#7fe6ff" /></svg>
      <span>Autosave complete (80 seconds ago)</span>
      <span className="ml-auto text-[#808080]">1.0.0008</span>
      <svg viewBox="0 0 12 12" className="ml-9 size-3 self-end"><path d="M9 0h2v2H9zM9 4h2v2H9zM9 8h2v2H9zM5 4h2v2H5zM5 8h2v2H5zM1 8h2v2H1z" fill="#aaa" /></svg>
    </footer>
  </section>
);

/* ---------- Rhino viewport scene ---------- */
const quad = [[168, 210], [1108, 172], [1522, 620], [52, 715]];
const project = (u: number, v: number) => {
  const [[x0, y0], [x1, y1], [x2, y2], [x3, y3]] = quad;
  const dx1 = x1 - x2, dx2 = x3 - x2, sx = x0 - x1 + x2 - x3;
  const dy1 = y1 - y2, dy2 = y3 - y2, sy = y0 - y1 + y2 - y3;
  const det = dx1 * dy2 - dx2 * dy1;
  const g = (sx * dy2 - dx2 * sy) / det;
  const h = (dx1 * sy - sx * dy1) / det;
  const w = g * u + h * v + 1;
  return [
    ((x1 - x0 + g * x1) * u + (x3 - x0 + h * x3) * v + x0) / w,
    ((y1 - y0 + g * y1) * u + (y3 - y0 + h * y3) * v + y0) / w,
  ];
};
const N = 28;
const gridPath = Array.from({ length: N + 1 }, (_, i) => {
  const t = i / N;
  return `M${project(t, 0).join(" ")}L${project(t, 1).join(" ")}M${project(0, t).join(" ")}L${project(1, t).join(" ")}`;
}).join("");
const hull = "M254 465C230 510 222 560 222 610C222 670 236 720 243 757A434 228 0 0 0 1112 757C1128 710 1135 660 1133 600C1130 550 1115 500 1103 465A425 186 0 0 0 254 465Z";

const Scene = () => (
  <svg viewBox="0 0 654 705" preserveAspectRatio="xMidYMid slice" className="block size-full">
    <defs>
      <linearGradient id="body" x1="0" x2="1"><stop offset="0" stopColor="#9a9a9a" /><stop offset=".12" stopColor="#dcdcdc" /><stop offset=".32" stopColor="#efefef" /><stop offset=".55" stopColor="#cfcfcf" /><stop offset=".75" stopColor="#8c8c8c" /><stop offset=".9" stopColor="#4a4a4a" /><stop offset="1" stopColor="#000" /></linearGradient>
      <linearGradient id="shade" x1="0" x2="0" y1="0" y2="1"><stop offset=".6" stopColor="#000" stopOpacity="0" /><stop offset="1" stopColor="#000" stopOpacity=".4" /></linearGradient>
      <linearGradient id="inner" x1="0" x2="1"><stop offset=".08" stopColor="#000" /><stop offset=".2" stopColor="#222" /><stop offset=".35" stopColor="#6d6d6d" /><stop offset=".6" stopColor="#bcbcbc" /><stop offset=".8" stopColor="#b0b0b0" /><stop offset="1" stopColor="#8d8d8d" /></linearGradient>
      <linearGradient id="rimg" x1="0" x2="1"><stop offset="0" stopColor="#8d8d8d" /><stop offset=".3" stopColor="#a8a8a8" /><stop offset=".6" stopColor="#fff" /><stop offset="1" stopColor="#c4c4c4" /></linearGradient>
      <linearGradient id="gi" x1="0" x2="1"><stop offset="0" stopColor="#0c2a0c" /><stop offset=".3" stopColor="#046304" /><stop offset=".55" stopColor="#078a07" /><stop offset="1" stopColor="#067006" /></linearGradient>
      <linearGradient id="go" x1="0" x2="1"><stop offset="0" stopColor="#057c05" /><stop offset=".7" stopColor="#047004" /><stop offset=".9" stopColor="#014e01" /><stop offset="1" stopColor="#067a06" /></linearGradient>
      <linearGradient id="rim" x1="0" x2="1"><stop offset="0" stopColor="#fff" /><stop offset=".3" stopColor="#e8ffe8" /><stop offset=".5" stopColor="#0a9a0a" /><stop offset="1" stopColor="#078a07" /></linearGradient>
      <clipPath id="topc"><ellipse cx="679" cy="467" rx="410" ry="165" /></clipPath>
      <clipPath id="botc"><ellipse cx="679" cy="747" rx="391" ry="206" /></clipPath>
    </defs>
    <rect width="654" height="705" fill="#9ba1a9" />
    <g transform="translate(91 225) scale(.3444 .3333)" strokeLinecap="round" fill="none">
      <path d="M168 210L1108 172L1522 620L52 715Z" fill="#969ba3" stroke="#7e838b" strokeWidth="3" />
      <path d={gridPath} stroke="#82878f" strokeWidth="2.6" />
      <path d="M1046 358L1270 349" stroke="#358a3c" strokeWidth="5" />
      <path d="M378 250C378 205 470 145 570 127L586 130L580 168L680 187L718 68C860 62 1000 100 1024 150C1045 200 1055 280 1045 370L900 400H400L378 320Z" fill="url(#go)" />
      <path d="M418 240C425 200 500 160 578 140L580 172L682 192L718 80C850 78 1016 110 1016 175C1005 225 900 240 815 253L803 290H440C425 280 418 260 418 240Z" fill="url(#gi)" />
      <path d="M718 74C840 72 960 98 1020 152" stroke="url(#rim)" strokeWidth="12" strokeLinecap="butt" />
      <path d="M582 173L680 190" stroke="#034a03" strokeWidth="5" />
    </g>
    <g fill="#000" className="font-['Open_Sans',sans-serif] italic">
      <text transform="translate(385 539) rotate(76)" fontSize="34">lly</text>
      <text transform="translate(395 576) rotate(76)" fontSize="40">is</text>
      <text transform="translate(406 613) rotate(76)" fontSize="52">good</text>
    </g>
    <g transform="translate(91 225) scale(.3444 .3333)" strokeLinecap="round" fill="none">
      <path d={hull} fill="url(#body)" />
      <path d={hull} fill="url(#shade)" />
      <ellipse cx="679" cy="465" rx="425" ry="186" fill="url(#rimg)" />
      <ellipse cx="679" cy="467" rx="410" ry="165" fill="url(#inner)" />
      <g clipPath="url(#topc)"><g clipPath="url(#botc)">
        <rect x="200" y="500" width="950" height="200" fill="#969ba3" />
        <path d={gridPath} stroke="#80858d" strokeWidth="2.6" />
        <path d="M772 545L800 625" stroke="#8a2e33" strokeWidth="4" />
      </g></g>
      <g stroke="#ffff00" strokeWidth="5">
        <ellipse cx="679" cy="465" rx="425" ry="186" />
        <ellipse cx="679" cy="467" rx="410" ry="165" />
        <path d="M243 757A434 231 0 0 0 1112 757C1112 690 1060 620 960 575M243 757C243 690 290 640 390 590" />
        <path d="M287 747A391 206 0 0 0 1070 747C1070 700 1030 640 930 597M287 747C287 690 340 640 400 605" />
        <path d="M633 285V537M638 305V540M736 640V955M742 640L741 985M386 590C480 540 600 524 679 524S860 545 975 585M400 600C500 555 600 542 679 542S860 560 945 598" />
      </g>
      <g stroke="#ffff00" strokeWidth="2.5">
        <path d="M222 610C222 520 400 430 679 430S1133 560 1133 655M222 655C222 770 420 880 679 880S1133 780 1133 640M254 465C230 510 222 560 222 610C222 670 236 720 243 757M1103 465C1118 520 1133 560 1133 640Q1130 710 1112 757M270 480L287 742M243 742H287M1070 415L1055 690L1100 688M1070 530L1090 410" />
      </g>
      <path d="M678 540V360" stroke="#2222ff" strokeWidth="6" />
      <path d="M678 296L696 366H660Z" fill="#2222ff" />
      <path d="M386 590C400 500 520 455 645 455" stroke="#2222ff" strokeWidth="6" />
      <path d="M386 590C390 720 500 835 678 832" stroke="#ff2222" strokeWidth="6" />
      <path d="M645 455C652 600 655 720 678 830" stroke="#22ee22" strokeWidth="6" />
      <path d="M714 573L895 562" stroke="#22ee22" strokeWidth="6" />
      <path d="M890 546L960 560L893 582Z" fill="#22ee22" />
      <path d="M682 597L705 690" stroke="#ff2222" strokeWidth="6" />
      <path d="M689 694L725 682L716 728Z" fill="#ff2222" />
      <g strokeWidth="6" strokeDasharray="6 8" strokeLinecap="butt">
        <path d="M232 602L670 577" stroke="#22ee22" />
        <path d="M632 408L674 566" stroke="#ff2222" />
        <path d="M678 590V700" stroke="#2222ff" />
        <path d="M575 622L668 580" stroke="#fff" strokeWidth="4" />
      </g>
      <g strokeWidth="6">
        <rect x="202" y="588" width="34" height="34" stroke="#11ee11" />
        <rect x="618" y="383" width="26" height="27" stroke="#ff2222" />
        <rect x="664" y="702" width="29" height="30" stroke="#2222ff" />
        <circle cx="563" cy="629" r="17" stroke="#fff" strokeWidth="4" />
        <circle cx="678" cy="575" r="9" stroke="#111" fill="#fff" />
      </g>
      <path d="M826 360V430M860 360V430M898 358V428" stroke="#2222dd" strokeWidth="4" />
      <path d="M824 359L900 355M824 396L900 391M824 430L900 426" stroke="#22dd33" strokeWidth="4" />
      <path d="M44 399L146 530" stroke="#8f0c0c" strokeWidth="4" />
      <path d="M34 388L54 410M54 388L34 410M136 519L156 541M156 519L136 541" stroke="#960000" strokeWidth="10" strokeLinecap="square" />
    </g>
    <g stroke="#5a5e63" fill="none"><path d="M44 626V661L81 659M44 661L48 668" /></g>
    <g fill="#5a5e63" className="font-['Open_Sans',sans-serif] text-base"><text x="46" y="628">z</text><text x="83" y="659">y</text><text x="52" y="676">x</text></g>
  </svg>
);

/* ---------- Rhino panels ---------- */
const Field = ({ label, children, short = false }: { label: string; children: ReactNode; short?: boolean }) => (
  <label className={short ? "flex h-[25px] shrink-0 items-center border-b border-[#d9dce6]" : "flex h-7 shrink-0 items-center border-b border-[#d9dce6]"}>
    <span className="w-[104px] shrink-0 overflow-hidden pb-px whitespace-nowrap">{label}</span>
    <span className="ml-1.5 flex h-[25px] min-w-0 flex-1 items-center">{children}</span>
  </label>
);
const Pick = ({ value }: { value: string }) => (
  <span className="relative block h-full min-w-0 flex-1 bg-white">
    <select aria-label={value} className="size-full appearance-none bg-transparent pr-5 pb-0.5 pl-[5px]"><option>{value}</option></select>
    <svg viewBox="0 0 8 6" className="pointer-events-none absolute top-[9px] right-[7px] h-1.5 w-2"><path d="M1 1L4 4.5L7 1" fill="none" stroke="#222" strokeWidth="1.5" /></svg>
  </span>
);
const Swatch = () => (
  <button type="button" aria-label="Pick colour" className="mr-[7px] grid h-[22px] w-[38px] shrink-0 place-items-center bg-[#f8f8fa]"><svg viewBox="4 3 27 29" className="h-4 w-[18px]">{stackIcon}</svg></button>
);
const PanelHead = ({ title }: { title: string }) => (
  <header className="flex h-6 shrink-0 items-center justify-between border-b border-[#d5d6da] px-1.5 text-[15px] text-[#6e6e72]"><h2 className="pb-1">{title}</h2><Gear /></header>
);
const HelpBall = () => (
  <svg viewBox="0 0 20 20" className="size-5"><circle cx="10" cy="10" r="9" fill="#2e50d4" /><path d="M6.5 7.5Q7 4.5 10 4.5T13.5 7.5Q13.5 9 11 10.3T10 13" fill="none" stroke="#fff" strokeWidth="2.2" /><circle cx="10" cy="15.8" r="1.3" fill="#fff" /></svg>
);

const propIcons = ["bigwheel", "paint", "texture", "decal", "wood", "edge", "cabinet", "shell", "cyl"];
const Properties = () => (
  <section className="flex h-[368px] shrink-0 flex-col rounded-t-lg bg-[#e9eaee]">
    <PanelHead title="Properties: Object" />
    <div className="flex min-h-0 flex-1">
      <div className="flex min-w-0 flex-1 flex-col overflow-hidden">
        <div className="grid w-[244px] shrink-0 grid-cols-6 gap-y-1 pt-1 pl-1">
          {propIcons.map((n) => (
            <button type="button" key={n} aria-label={n} className={n === "bigwheel" ? "grid size-9 place-items-center bg-[#cfd6ec]" : "grid size-9 place-items-center"}>
              <svg viewBox="0 0 34 34" className="size-9">{rh[n]}</svg>
            </button>
          ))}
        </div>
        <div className="mt-3.5 flex min-h-0 flex-1 justify-between pr-[11px]">
          <div className="min-w-0 flex-1 pl-[5px]">
            <h3 className="h-[31px] border-b border-[#d9dce6] pt-1 text-[19px] leading-6">Object</h3>
            <div className="flex flex-col pl-[18px]">
              <Field label="Type"><span className="overflow-hidden pb-px pl-[5px] whitespace-nowrap">closed solid polysurface</span></Field>
              <Field label="Name"><input aria-label="Name" className="h-full w-full bg-white px-1" /></Field>
              <Field label="Layer"><span className="grid h-full w-[21px] shrink-0 place-items-center bg-white"><span className="size-[21px] bg-black" /></span><Pick value="Default" /></Field>
              <Field label="Display Color"><Swatch /><Pick value="By Layer" /></Field>
              <Field label="Display Mode"><Pick value="Rendered" /></Field>
              <Field label="Linetype"><Pick value="By Layer" /></Field>
              <Field label="Linetype Scale" short>
                <input defaultValue="1.000" className="h-[22px] min-w-0 flex-1 bg-white pl-[5px]" />
                <span className="flex h-[22px] w-[15px] flex-col items-center justify-around border-l border-[#c6cbe0] bg-white">
                  <span className="rotate-180"><Caret /></span><Caret />
                </span>
              </Field>
              <Field label="Print Color"><Swatch /><Pick value="By Layer" /></Field>
            </div>
          </div>
          <div className="ml-2.5 h-20 w-2.5 shrink-0 rounded-full bg-[#bfbfc1]" />
        </div>
      </div>
      <div className="flex w-[25px] shrink-0 flex-col">
        <div className="grid h-[46px] place-items-center"><svg viewBox="2 2 30 30" className="size-5"><Wheel cx={17} cy={17} r={10} w={6} /></svg></div>
        <div className="flex flex-1 flex-col items-center gap-[26px] rounded-tl-lg bg-[#d8d9dd] pt-3">
          <svg viewBox="0 0 20 20" className="size-5"><rect x="1" y="1" width="18" height="14" fill="#aaa" stroke="#222" strokeWidth="2" /><path d="M7 18H13" stroke="#111" strokeWidth="3" /></svg>
          <svg viewBox="0 0 20 20" className="size-5"><rect x="1" y="1" width="18" height="18" fill="#dfe6fb" stroke="#667" /><path d="M1 2H19" stroke="#20309c" strokeWidth="2" /><circle cx="10" cy="11" r="7" fill="#2e50d4" /><path d="M8 9Q10 6 12 9Q12 11 10 12V14" stroke="#fff" strokeWidth="1.5" fill="none" /></svg>
        </div>
      </div>
    </div>
  </section>
);

const layerIcons: ReactNode[] = [
  <>{L("M1 2L17 4V12L10 18L1 9Z", "#222", 1, "#ff7d55")}{L("M1 9L10 18", "#1c3cb0", 2)}<circle cx="14" cy="14" r="6" fill="#fff" fillOpacity=".8" />{L("M14 10v8M10 14h8", "#000", 2.5)}</>,
  <>{L("M2 2L10 4V10H3ZM10 10H19V16L14 18L10 16ZM3 12V17H8", "#aaa", 1.2)}</>,
  <>{L("M3 2L18 18M18 2L3 18", "#999", 3.5)}{L("M3 2L18 18M18 2L3 18", "#e3e3e3", 1.5)}</>,
  <>{L("M14 3Q3 -1 2 9Q3 15 7 17M8 8H16L19 11V16L12 18L8 15Z", "#999", 1.2, "#dcdcdf")}</>,
  L("M10 4L19 14H1Z", "#999", 1.3, "#d6d6d8"),
  L("M10 16L1 6H19Z", "#999", 1.3, "#d6d6d8"),
  L("M5 10L14 2V18Z", "#999", 1.3, "#d6d6d8"),
  L("M1 2H19L12 11V19L8 17V11Z", "#0a1440", 1.3, "url(#blue)"),
  <><rect x="2" y="2" width="16" height="17" fill="#fff" stroke="#333" /><rect x="2" y="2" width="16" height="4" fill="#444" />{L("M7 6V19M13 6V19M2 10H18M2 14H18", "#555", 1)}</>,
  L("M2 3H18M2 10H18M2 17H18", "#111", 2.5),
];
const Layers = () => (
  <section className="mt-0.5 flex min-h-0 flex-1 flex-col rounded-t-lg bg-[#e9eaee]">
    <PanelHead title="Layers" />
    <div className="flex shrink-0 flex-wrap gap-x-[7px] gap-y-2 pt-3 pr-4 pl-[3px]">
      {layerIcons.map((ic, i) => <button type="button" key={i} aria-label={`Layer tool ${i + 1}`} className="size-5"><svg viewBox="0 0 20 20" className="size-5">{ic}</svg></button>)}
      <button type="button" aria-label="Help" className="size-5"><HelpBall /></button>
    </div>
    <label className="mt-2.5 flex h-[27px] shrink-0 items-center rounded-full border border-[#bcc4dc] bg-white pl-[5px]">
      <svg viewBox="0 0 16 16" className="size-4"><circle cx="7" cy="7" r="5" fill="none" stroke="#333" strokeWidth="1.3" /><path d="M11 11L15 15" stroke="#333" strokeWidth="1.3" /></svg>
      <input placeholder="Search" aria-label="Search" className="ml-0.5 min-w-0 flex-1 bg-transparent placeholder:text-[#77777b]" />
    </label>
    <div className="mt-2 flex min-h-0 flex-1 flex-col justify-between bg-white">
      <table className="w-full table-fixed border-collapse text-left">
        <colgroup><col className="w-[100px]" /><col className="w-[25px]" /><col className="w-[25px]" /><col className="w-[25px]" /><col className="w-[25px]" /><col /></colgroup>
        <thead>
          <tr className="h-[29px] border-t border-b border-[#d9dce6]">
            <th className="border-r border-[#d9dce6] pl-1.5 font-normal">Layer</th>
            {[1, 2, 3, 4].map((i) => <th key={i} className="border-r border-[#d9dce6]" />)}
            <th className="pl-[5px] font-normal">Material</th>
          </tr>
        </thead>
        <tbody>
          <tr className="h-6 border-b border-dotted border-[#d0d3de]">
            <td className="pl-[21px] text-[15px] leading-5 font-bold">Default</td>
            <td><svg viewBox="0 0 20 14" className="ml-0.5 h-3.5 w-5"><path d="M2 7L7 12L18 1" fill="none" stroke="#111" strokeWidth="1.5" /></svg></td>
            <td /><td />
            <td><span className="ml-[3px] block size-[18px] bg-black" /></td>
            <td><span className="ml-px block size-[17px] rounded-full border border-[#777]" /></td>
          </tr>
        </tbody>
      </table>
      <div className="mb-[5px] ml-[9px] h-2.5 w-[116px] rounded-full bg-[#c3c3c3]" />
    </div>
  </section>
);

const Grip = () => (
  <div className="flex w-3 shrink-0 flex-col items-center justify-center gap-[4px] border-r border-[#c9ccd8] bg-[#e4e5e9]">
    {[1, 2, 3, 4].map((i) => <span key={i} className="size-[3px] rounded-full border border-[#b4b4b8]" />)}
  </div>
);
const RhinoLogo = ({ className }: { className: string }) => (
  <svg viewBox="0 0 30 32" className={className}>
    <rect width="30" height="32" fill="#000" />
    <path d="M6 0L9 7L13 13L19 18L23 13L23 19L28 23L29 28L24 32H18L19 27L13 22L7 23L1 15L4 9Z" fill="#fff" />
    <path d="M4 13L12 18M15 21L21 24" stroke="#000" strokeWidth="1.5" />
    <g fill="none" stroke="#ddd" strokeWidth="1.8"><circle cx="24.5" cy="4.5" r="2.5" /><circle cx="24.5" cy="10" r="3" /></g>
  </svg>
);

const rhinoMenu = ["File", "Edit", "View", "Curve", "Surface", "SubD", "Solid", "Mesh", "Drafting", "Transform", "Tools", "Analyze", "Render", "Window", "Help"];
const rhinoTabs = ["CPl...", "Set...", "Di...", "Se...", "Viewp...", "Visi...", "Tran...", "Curv...", "Surfa...", "Soli...", "Sub...", "Mes...", "Rend...", "Dr...", "Ne...", "Curve...", "Li..."];
const snaps: [string, boolean][] = [["End", true], ["Near", true], ["Point", true], ["Mid", false], ["Cen", false], ["Int", true], ["Perp", true], ["Tan", false], ["Quad", false], ["Knot", false], ["Vertex", false], ["Project", false], ["Disable", false]];

const Rhino = () => (
  <section className="flex min-w-0 flex-col overflow-hidden border-t border-l-[3px] border-[#c0c6da] bg-[#d8d9dd] pb-[3px] text-[#2b2b2f]">
    <header className="flex h-[37px] shrink-0 items-center pb-0.5 pl-2 text-sm text-[#707074]">
      <RhinoLogo className="mr-[5px] h-5 w-5" />
      <h1>Untitled - Rhino 8 Evaluation (86 Days Remaining) - [Perspective]</h1>
      <WinButtons className="gap-11 pr-6" />
    </header>
    <nav className="flex h-[25px] shrink-0 items-center gap-[17px] bg-[#e9eaee] pb-1.5 pl-[7px] text-base leading-5">
      {rhinoMenu.map((t) => <button type="button" key={t}>{t}</button>)}
    </nav>
    <div className="flex h-[68px] shrink-0 pr-0.5">
      <Grip />
      <div className="flex min-w-0 flex-1 flex-col bg-white text-base text-black">
        <div className="flex h-[45px] flex-col justify-end overflow-hidden border-b border-[#bfc6cc] pb-0.5 pl-px">
          <p className="h-[26px] shrink-0 leading-6">1 closed polysurface added to selection.</p>
          <p className="h-6 shrink-0 leading-6">1 closed polysurface added to selection.</p>
        </div>
        <label className="flex h-[23px] items-center pb-1.5 pl-0.5 text-[15px] font-bold">Command:<input className="min-w-0 flex-1 font-normal" /></label>
      </div>
      <div className="flex w-5 shrink-0 flex-col items-center justify-end gap-px bg-linear-to-b from-[#f0f0f0] from-66% to-white to-66% pb-px">
        <button type="button" aria-label="Previous" className="grid h-2.5 w-[18px] rotate-180 place-items-center border border-[#999] bg-[#f4f4f4]"><Caret /></button>
        <button type="button" aria-label="Next" className="grid h-2.5 w-[18px] place-items-center border border-[#999] bg-[#f4f4f4]"><Caret /></button>
      </div>
    </div>
    <div className="mt-[3px] flex h-[66px] shrink-0 pr-0.5">
      <Grip />
      <div className="flex min-w-0 flex-1 flex-col">
        <div className="flex h-6 items-center pr-1 text-[#707074]" role="tablist">
          <button type="button" role="tab" className="h-full w-[56px] rounded-tr-lg bg-[#e9eaee] pl-1 text-[#2b2b2f]">Sta...</button>
          <div className="mr-2 ml-3.5 flex flex-1 justify-between">
            {rhinoTabs.map((t) => <button type="button" role="tab" key={t}>{t}</button>)}
          </div>
          <Gear />
        </div>
        <div className="flex flex-1 items-start overflow-hidden bg-[#e9eaee]">
          {toolbar.map((t) => <Tool key={t} id={t} />)}
          <button type="button" aria-label="More" className="ml-1 h-9 text-xl text-[#999]">»</button>
        </div>
      </div>
    </div>
    <div className="mt-[3px] flex min-h-0 flex-1 gap-[3px] pr-0.5">
      <aside className="flex w-[147px] shrink-0 flex-col rounded-t-lg bg-[#e9eaee]">
        <div className="flex h-3 shrink-0 items-center justify-center gap-1 border-b border-[#d0d1d6]">{[1, 2, 3, 4].map((i) => <span key={i} className="size-[3px] rounded-full border border-[#b4b4b8]" />)}</div>
        <div className="flex flex-wrap content-start">
          {toolbox.map((t) => <span key={t} className="h-[35px]"><Tool id={t} /></span>)}
        </div>
      </aside>
      <div className="flex min-w-0 flex-1 flex-col">
        <div className="relative min-h-0 flex-1 border border-[#b9c0d8]">
          <Scene />
          <button type="button" className="absolute top-0 left-0 flex h-[22px] items-center rounded-br-md bg-[#6ba3ff] pl-2 font-bold text-[#1d2740]">
            <span className="pb-0.5">Perspective</span><span className="ml-2 grid h-[18px] w-[14px] place-items-center border-l border-[#1d2740]"><svg viewBox="0 0 10 6" className="h-1.5 w-2.5"><path d="M0 0H10L5 6Z" fill="#1d2740" /></svg></span>
          </button>
        </div>
        <div className="flex h-[27px] shrink-0 items-center gap-[21px] text-base text-[#707074]" role="tablist">
          <button type="button" role="tab" className="-mr-2 h-[27px] w-[111px] rounded-b-md border border-t-0 border-[#bcc4dc] bg-[#e9eaee] pl-1 text-[#2b2b2f]">Perspective</button>
          {["Top", "Front", "Right"].map((t) => <button type="button" role="tab" key={t}>{t}</button>)}
          <button type="button" aria-label="New viewport tab"><svg viewBox="0 0 12 12" className="size-3"><path d="M4.5 .5H7.5V4.5H11.5V7.5H7.5V11.5H4.5V7.5H.5V4.5H4.5Z" fill="none" stroke="#777" /></svg></button>
        </div>
      </div>
      <aside className="flex w-[296px] shrink-0 flex-col text-base leading-5"><Properties /><Layers /></aside>
    </div>
    <div className="mt-0.5 flex h-[51px] shrink-0 bg-[#e9eaee]">
      <div className="grid w-6 shrink-0 place-items-center overflow-hidden border-r border-[#d0d1d6] text-[#85858a]"><span className="rotate-180 leading-none [writing-mode:vertical-rl]">OSn...</span></div>
      <div className="flex min-w-0 flex-1 flex-col">
        <div className="flex h-6 items-center bg-[#d8d9dd] pr-1.5">
          <button type="button" role="tab" className="h-full w-[74px] rounded-tr-lg bg-[#e9eaee] text-base">OSnap</button>
          <button type="button" role="tab" className="mr-auto ml-3 text-base text-[#707074]">Selection Filters</button>
          <Gear />
        </div>
        <div className="flex flex-1 items-center gap-3 pl-[5px]">
          {snaps.map(([t, on]) => (
            <label key={t} className="flex items-center gap-1.5 last:ml-2.5">
              <span className="relative block size-4">
                <input type="checkbox" defaultChecked={on} className="block size-4 appearance-none border border-[#bcc4dc] bg-white" />
                {on && <svg viewBox="0 0 16 16" className="pointer-events-none absolute inset-0 size-4"><path d="M2.5 8L6.5 12L13.5 3" fill="none" stroke="#1b1b1b" strokeWidth="2.5" /></svg>}
              </span>
              {t}
            </label>
          ))}
        </div>
      </div>
    </div>
    <footer className="flex h-[26px] shrink-0 items-center bg-[#e9eaee] pr-[9px] pb-0.5 pl-1.5 text-[#525256]">
      <button type="button" aria-label="Left sidebar"><svg viewBox="0 0 18 18" className="size-[18px]"><rect x="1" y="1" width="16" height="16" fill="#fff" stroke="#4a4a4a" strokeWidth="2" /><rect x="1" y="1" width="6" height="16" fill="#4a4a4a" /></svg></button>
      <span className="ml-[26px] w-[145px]">CPlane</span>
      <span className="w-[269px] whitespace-pre">x 123.977  y -76.300  z 0</span>
      <span className="w-[107px]">Millimeters</span>
      <span className="mr-2 size-5 bg-black" />
      <span>Default</span>
      <div className="ml-auto flex items-center gap-[25px]">
        <button type="button">Grid Snap</button><button type="button">Ortho</button><button type="button">Planar</button>
        <button type="button" className="-ml-3 mr-[-21px] h-6 w-9 overflow-hidden rounded-l bg-[#cfd6ec] pl-[10px] text-left font-bold whitespace-nowrap text-[#1b1b1f]">Osnap</button>
        <button type="button" aria-label="Right sidebar"><svg viewBox="0 0 18 18" className="size-[18px]"><rect x="1" y="1" width="16" height="16" fill="#fff" stroke="#4a4a4a" strokeWidth="2" /><rect x="11" y="1" width="6" height="16" fill="#4a4a4a" /></svg></button>
      </div>
    </footer>
  </section>
);

/* ---------- Taskbar ---------- */
const Taskbar = () => (
  <footer className="grid h-[58px] shrink-0 grid-cols-[642px_1fr_auto] border-t border-[#b5b5b9] bg-[#dadada] font-['Open_Sans','Noto_Sans_CJK_SC',sans-serif] text-sm text-[#222]">
    <button type="button" className="flex items-center gap-1.5 pb-0.5 pl-1 text-left">
      <svg viewBox="0 0 34 40" className="h-10 w-[30px]">
        <circle cx="14" cy="24" r="14" fill="url(#sun)" />
        <path d="M12 32a5 5 0 0 1 2-9 6 6 0 0 1 11 1 4.5 4.5 0 0 1 0 8z" fill="#cfe0fb" stroke="#a8c3f0" strokeWidth=".5" />
        <circle cx="24" cy="10" r="10" fill="#c42b1c" />
        <text x="24" y="15" textAnchor="middle" fontSize="14" fill="#fff">1</text>
      </svg>
      <span className="leading-5"><span className="block text-[15px] text-[#222]">16°C</span><span className="block text-[15px] text-[#555]">大部晴朗</span></span>
    </button>
    <div className="flex items-center">
      <button type="button" aria-label="Start"><svg viewBox="0 0 30 30" className="size-[30px]"><path d="M0 0H14.5V14.5H0ZM15.5 0H30V14.5H15.5ZM0 15.5H14.5V30H0ZM15.5 15.5H30V30H15.5Z" fill="url(#win)" /></svg></button>
      <label className="ml-[18px] flex h-[39px] w-[273px] items-center rounded-full border border-[#c9c9c9] bg-[#f4f4f4] pr-1.5 pl-3.5">
        <svg viewBox="0 0 18 18" className="size-[18px]"><circle cx="8" cy="7.5" r="6.5" fill="none" stroke="#333" strokeWidth="2" /><path d="M12.5 12.5L17 17" stroke="#333" strokeWidth="2" /></svg>
        <input placeholder="搜索" aria-label="搜索" className="ml-3 min-w-0 flex-1 bg-transparent text-lg placeholder:text-[#666]" />
        <svg viewBox="0 0 56 30" className="h-[30px] w-14">
          <path d="M40 18Q50 18 54 13Q55 7 47 6" fill="none" stroke="#8d8db4" strokeWidth="1.5" />
          <path d="M3 12Q6 8 9 8L12 4L14 8Q24 13 31 15L37 12L36 17Q41 18 46 17Q36 20 31 25Q27 29 20 28Q14 26 10 20L3 15Z" fill="#9490b4" />
          <path d="M5 15Q14 19 20 27Q14 26 10 20Z" fill="#d8cfc4" /><circle cx="12" cy="11" r="1" fill="#223" />
          <circle cx="30" cy="4" r="3" fill="#bfe6ee" /><circle cx="3" cy="23" r="3.5" fill="#bfe6ee" /><circle cx="42" cy="27" r="2.5" fill="#c5d8f0" />
        </svg>
      </label>
      <div className="ml-4 flex items-center gap-[25px]">
        <svg viewBox="0 0 30 30" className="size-[30px]"><rect x="0" y="9" width="23" height="20" fill="#303030" /><rect x="8" y="1" width="22" height="20" fill="#f4f4f4" fillOpacity=".88" /></svg>
        <div className="relative"><svg viewBox="0 0 30 28" className="h-7 w-[30px]"><path d="M0 2Q0 0 2 0H10L13 3H30V10H0Z" fill="#e0a100" /><rect y="4" width="30" height="24" rx="1.5" fill="#fdc93a" /><path d="M5 28V22Q5 20 7 20H23Q25 20 25 22V28Z" fill="#1477d1" /><path d="M9 24H21" stroke="#0a4f9c" strokeWidth="1.5" /></svg><span className="absolute -bottom-2.5 left-[11px] h-1 w-2 rounded-full bg-[#777]" /></div>
        <svg viewBox="0 0 31 28" className="h-7 w-[31px]"><path d="M5 10L17 0L30 9V28H10Q5 28 5 22Z" fill="#1a8fe0" /><path d="M12 14L30 6V12L14 20Z" fill="#0b4a9e" /><path d="M10 28L30 11V24Q30 28 26 28Z" fill="#4bd0fa" /><rect y="7" width="16" height="15" rx="1" fill="#0f6cbd" /><ellipse cx="8" cy="14.5" rx="3.8" ry="4.2" fill="none" stroke="#fff" strokeWidth="2" /></svg>
        <div className="relative"><RhinoLogo className="h-[30px] w-[30px]" /><span className="absolute -bottom-2.5 left-[11px] h-1 w-2 rounded-full bg-[#777]" /></div>
        <svg viewBox="0 0 30 30" className="size-[30px] self-end overflow-visible"><rect x="0" y="5" width="22" height="22" rx="3" fill="#f3f3f5" /><path d="M14 9H4V22" fill="none" stroke="#d83b1a" strokeWidth="3" strokeDasharray="2.5 2" /><path d="M17 9V28M7 23H22" stroke="#99a" strokeWidth="3" /><rect x="8" y="26" width="15" height="4" rx="2" fill="#555" /><circle cx="27" cy="21" r="2.5" fill="none" stroke="#1c9be0" strokeWidth="2" /><circle cx="16" cy="32" r="2.5" fill="none" stroke="#1c9be0" strokeWidth="2" /></svg>
      </div>
    </div>
    <div className="flex items-center pr-[25px]">
      <svg viewBox="0 0 14 9" className="h-[9px] w-3.5"><path d="M1 8L7 1.5L13 8" fill="none" stroke="#222" strokeWidth="1.8" /></svg>
      <span className="ml-[23px] text-lg">中</span>
      <span className="ml-[30px] text-lg">拼</span>
      <svg viewBox="0 0 22 18" className="ml-[27px] h-[18px] w-[22px]"><g fill="none" stroke="#222" strokeWidth="1.5"><path d="M1 7Q11 -3 21 7M4 10Q11 3 18 10M7 13Q11 9 15 13" /></g><circle cx="11" cy="15.5" r="2" fill="#222" /></svg>
      <svg viewBox="0 0 22 18" className="ml-2 h-[18px] w-[22px]"><path d="M1 6.5H5L10 2V16L5 11.5H1Z" fill="none" stroke="#222" strokeWidth="1.5" /><path d="M13 6Q15 9 13 12" fill="none" stroke="#222" strokeWidth="1.5" /><path d="M15.5 4Q19 9 15.5 14M18 2Q22.5 9 18 16" fill="none" stroke="#bbb" strokeWidth="1.5" /></svg>
      <svg viewBox="0 0 22 18" className="ml-2 h-[18px] w-[22px]"><rect x="1" y="5" width="17" height="11" rx="2.5" fill="none" stroke="#222" strokeWidth="1.5" /><rect x="4" y="7.5" width="11.5" height="6" fill="#222" /><path d="M20 8V13" stroke="#222" strokeWidth="2" /><path d="M5 0L1 6H4L3 10L8 4H5Z" fill="#111" /></svg>
      <div className="ml-5 text-right text-sm leading-5"><div>7:06</div><div>2024/9/9</div></div>
      <svg viewBox="0 0 18 20" className="ml-[11px] h-5 w-[17px]"><path d="M9 0Q15 1 15.5 7V12L18 16H0L2.5 12V7Q3 1 9 0ZM6 17.5H12Q9 21 6 17.5Z" fill="#0a4aa0" /></svg>
    </div>
  </footer>
);

export default function App() {
  return (
    <main className="flex h-screen flex-col overflow-hidden font-['Open_Sans','Noto_Sans_CJK_SC',sans-serif] text-[15px] leading-5 [&_h1]:whitespace-nowrap">
      <Defs />
      <div className="grid min-h-0 flex-1 grid-cols-[785fr_1110fr]">
        <Grasshopper />
        <Rhino />
      </div>
      <Taskbar />
    </main>
  );
}
